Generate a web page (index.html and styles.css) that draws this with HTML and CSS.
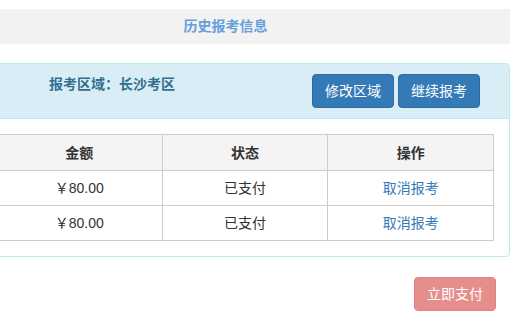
FILE: index.html
```html
<!DOCTYPE html>
<html>
  <head>
    <title>历史报考信息</title>
    <meta charset="utf-8"/>
    <link rel="stylesheet" href="styles.css">
  </head>
  <body>
    <div class="page">
      <div class="title-bar">历史报考信息</div>

      <div class="panel">
        <div class="panel-heading">
          <span class="region">报考区域：长沙考区</span>
          <div class="actions">
            <button class="btn btn-primary">修改区域</button>
            <button class="btn btn-primary">继续报考</button>
          </div>
        </div>
        <div class="panel-body">
          <table class="records">
            <colgroup>
              <col class="col-no">
              <col>
              <col>
              <col>
            </colgroup>
            <thead>
              <tr>
                <th></th>
                <th>金额</th>
                <th>状态</th>
                <th>操作</th>
              </tr>
            </thead>
            <tbody>
              <tr>
                <td></td>
                <td>￥80.00</td>
                <td>已支付</td>
                <td><a href="#">取消报考</a></td>
              </tr>
              <tr>
                <td></td>
                <td>￥80.00</td>
                <td>已支付</td>
                <td><a href="#">取消报考</a></td>
              </tr>
            </tbody>
          </table>
        </div>
      </div>

      <div class="pay-row">
        <button class="btn btn-danger" disabled>立即支付</button>
      </div>
    </div>
  </body>
</html>
```

FILE: styles.css
```css
body {
  margin: 0;
  font-family: "Liberation Sans", "Noto Sans CJK SC", sans-serif;
  font-size: 14px;
  line-height: 20px;
  color: #333;
  background: #fff;
  overflow: hidden;
}

/* the page is wider than the window, scrolled a bit to the right */
.page {
  width: 569px;
  margin: 9px 0 0 -59px;
}

.title-bar {
  height: 35px;
  line-height: 35px;
  background: #f2f2f2;
  text-align: center;
  font-weight: bold;
  color: #64a0dc;
}

.panel {
  margin-top: 19px;
  border: 1px solid #bce8f1;
  border-radius: 4px;
}
.panel-heading {
  display: flex;
  justify-content: space-between;
  align-items: flex-start;
  padding: 10px 15px;
  background: #d9edf7;
  border-bottom: 1px solid #bce8f1;
  border-radius: 3px 3px 0 0;
  color: #31708f;
}
.region {
  padding-left: 92px;
  font-weight: bold;
}
.actions {
  display: flex;
  gap: 4px;
  margin-right: 14px;
}
.panel-body {
  padding: 15px;
}

.btn {
  font-family: inherit;
  font-size: 14px;
  line-height: 20px;
  padding: 6px 12px;
  border: 1px solid transparent;
  border-radius: 4px;
  color: #fff;
  cursor: pointer;
}
.btn-primary {
  background: #337ab7;
  border-color: #2e6da4;
}
.btn-danger {
  background: #d9534f;
  border-color: #d43f3a;
}
.btn[disabled] {
  opacity: 0.65;
  cursor: not-allowed;
}

.records {
  width: 100%;
  table-layout: fixed;
  border-collapse: collapse;
}
.records .col-no {
  width: 39px;
}
.records th,
.records td {
  border: 1px solid #ccc;
  text-align: center;
}
.records th {
  padding: 8px 8px 7px;
  background: #f4f4f4;
  font-weight: bold;
}
.records td {
  padding: 7px 8px;
}
.records a {
  color: #337ab7;
  text-decoration: none;
}

.pay-row {
  display: flex;
  justify-content: flex-end;
  margin: 20px 14px 0 0;
}
```
